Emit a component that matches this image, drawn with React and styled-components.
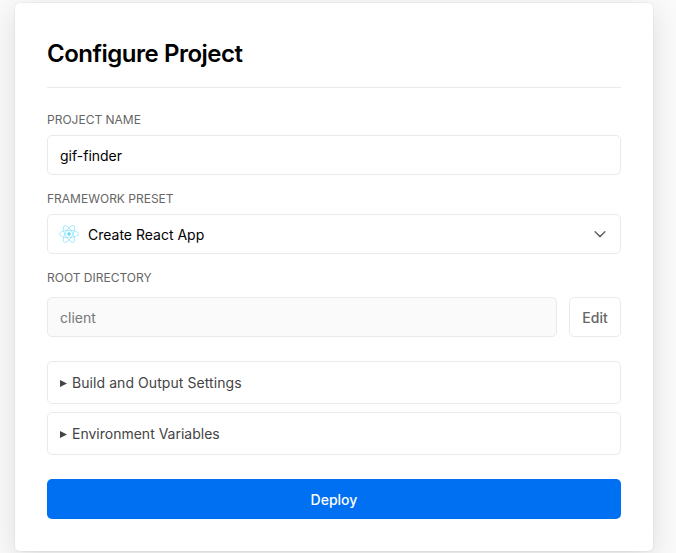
import React from 'react';
import styled, { createGlobalStyle } from 'styled-components';

const GlobalStyle = createGlobalStyle`
  *, *::before, *::after { box-sizing: border-box; }
  html, body { margin: 0; height: 100%; overflow: hidden; }
  body {
    background: #fafafa;
    color: #000;
    font-family: Inter, "Liberation Sans", sans-serif;
    -webkit-font-smoothing: antialiased;
  }
`;

const Page = styled.main`
  height: 553px;
  padding: 3px 23px 0 15px;
  overflow: hidden;
`;

const Card = styled.section`
  height: 548px;
  padding: 32px;
  background: #fff;
  border-radius: 5px;
  box-shadow: 0 0 0 1px rgba(0, 0, 0, 0.03), 0 8px 30px rgba(0, 0, 0, 0.12);
`;

const Title = styled.h1`
  height: 53px;
  margin: 0 0 24px;
  border-bottom: 1px solid #eaeaea;
  font-size: 24px;
  font-weight: 600;
  line-height: 38px;
  letter-spacing: -0.48px;
`;

const Label = styled.label`
  display: block;
  height: 16px;
  margin-bottom: ${({ $gap = 7 }) => $gap}px;
  color: #666;
  font-size: 12px;
  line-height: 16px;
  text-transform: uppercase;
`;

const Field = styled.div`
  display: flex;
  flex: 1;
  align-items: center;
  height: 40px;
  padding: 1px 11px 0 12px;
  border: 1px solid #eaeaea;
  border-radius: 5px;
  background: ${({ $disabled }) => ($disabled ? '#fafafa' : '#fff')};
  color: ${({ $disabled }) => ($disabled ? '#777' : '#000')};
  font-size: 14px;
`;

const Group = styled.div`
  margin-bottom: 16px;
`;

const Row = styled.div`
  display: flex;
  gap: 12px;
`;

const ReactLogo = styled.svg`
  width: 20px;
  height: 18px;
  margin: 0 9px 2px -1px;
`;

const Chevron = styled.svg`
  width: 18px;
  height: 18px;
  margin: 0 0 1px auto;
`;

const EditButton = styled.button`
  width: 52px;
  height: 40px;
  padding: 1px 0 0;
  border: 1px solid #eaeaea;
  border-radius: 5px;
  background: #fff;
  color: #666;
  font: 500 14px Inter, sans-serif;
`;

const Sections = styled.div`
  display: grid;
  gap: 8px;
  margin: 24px 0;
`;

const Disclosure = styled.div`
  display: flex;
  align-items: center;
  gap: 5px;
  height: 43px;
  padding: 0 12px;
  border: 1px solid #eaeaea;
  border-radius: 5px;
  color: #444;
  font-size: 14px;
  letter-spacing: ${({ $tracking = 0 }) => $tracking}px;
`;

const Marker = styled.svg`
  width: 7px;
  height: 7px;
  margin-top: 2px;
`;

const DeployButton = styled.button`
  display: block;
  width: 100%;
  height: 40px;
  padding: 1px 0 0;
  border: 0;
  border-radius: 5px;
  background: #0070f3;
  color: #fff;
  font: 500 14px Inter, sans-serif;
`;

function Section({ tracking, children }) {
  return (
    <Disclosure $tracking={tracking}>
      <Marker viewBox="0 0 7 7"><path d="M0 0L7 3.5L0 7Z" fill="#444" /></Marker>
      {children}
    </Disclosure>
  );
}

export default function App() {
  return (
    <>
      <GlobalStyle />
      <Page>
        <Card>
          <Title>Configure Project</Title>
          <Group>
            <Label>Project Name</Label>
            <Field>gif-finder</Field>
          </Group>
          <Group>
            <Label>Framework Preset</Label>
            <Field>
              <ReactLogo viewBox="-11.5 -10.23 23 20.46" fill="none" stroke="#61dafb">
                <circle r="2.05" fill="#61dafb" stroke="none" />
                <g strokeWidth="0.8" strokeOpacity="0.75">
                  <ellipse rx="11" ry="4.2" />
                  <ellipse rx="11" ry="4.2" transform="rotate(60)" />
                  <ellipse rx="11" ry="4.2" transform="rotate(120)" />
                </g>
              </ReactLogo>
              Create React App
              <Chevron viewBox="0 0 24 24" fill="none" stroke="#666" strokeWidth="2" strokeLinecap="round" strokeLinejoin="round">
                <path d="M18.5 9l-6.5 6.5L5.5 9" />
              </Chevron>
            </Field>
          </Group>
          <Label $gap={11}>Root Directory</Label>
          <Row>
            <Field $disabled>client</Field>
            <EditButton>Edit</EditButton>
          </Row>
          <Sections>
            <Section tracking={0.07}>Build and Output Settings</Section>
            <Section>Environment Variables</Section>
          </Sections>
          <DeployButton>Deploy</DeployButton>
        </Card>
      </Page>
    </>
  );
}
